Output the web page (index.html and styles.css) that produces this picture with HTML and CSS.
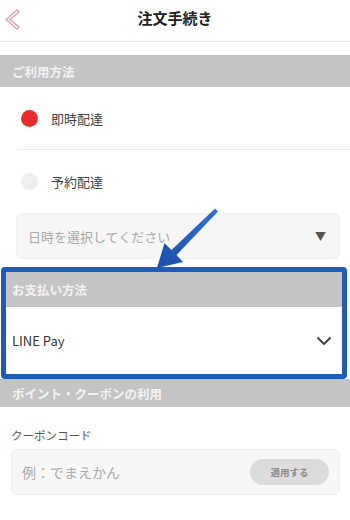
FILE: index.html
```html
<!DOCTYPE html>
<html lang="ja">
<head>
<meta charset="utf-8">
<link rel="stylesheet" href="styles.css">
</head>
<body>
<div class="page">
  <header class="header">
    <svg class="back" width="24" height="40" viewBox="0 0 24 40">
      <path d="M17 10 L6 19.5 L17 29 L19 27 L10 19.5 L19 12 Z" fill="none" stroke="#e0a0a8" stroke-width="1.4" stroke-linejoin="round"/>
    </svg>
    <h1 class="title">注文手続き</h1>
  </header>

  <div class="band band-first">ご利用方法</div>
  <div class="option option-sep">
    <span class="dot dot-on"></span><span class="opt-label">即時配達</span>
  </div>
  <div class="option">
    <span class="dot dot-off"></span><span class="opt-label">予約配達</span>
  </div>
  <div class="select">
    <span class="select-text">日時を選択してください</span>
    <span class="select-caret">▼</span>
  </div>

  <div class="highlight">
    <div class="band band-inner">お支払い方法</div>
    <div class="pay-row">
      <span class="pay-label">LINE Pay</span>
      <svg class="chev" width="16" height="10" viewBox="0 0 16 10">
        <polyline points="2,2 8,8 14,2" fill="none" stroke="#444" stroke-width="2" stroke-linecap="round" stroke-linejoin="round"/>
      </svg>
    </div>
  </div>

  <div class="band band-coupon">ポイント・クーポンの利用</div>
  <div class="coupon">
    <div class="coupon-label">クーポンコード</div>
    <div class="coupon-input">
      <span class="coupon-ph">例：でまえかん</span>
      <span class="apply">適用する</span>
    </div>
  </div>

  <svg class="arrow" width="90" height="75" viewBox="0 0 90 75">
    <defs>
      <linearGradient id="ag" x1="0" y1="1" x2="1" y2="0">
        <stop offset="0" stop-color="#1a4fa8"/>
        <stop offset="1" stop-color="#2f73d6"/>
      </linearGradient>
    </defs>
    <polygon points="12,64 38,58 31.5,51 73,7.5 70,4.5 26.5,46 19.5,39" fill="url(#ag)"/>
  </svg>
</div>
</body>
</html>
```

FILE: styles.css
```css
* { box-sizing: border-box; }
html, body { margin: 0; padding: 0; background: #fff; }
body {
  font-family: "Noto Sans CJK JP", "Noto Sans", sans-serif;
  color: #333;
}
.page {
  position: relative;
  width: 350px;
  height: 520px;
  overflow: hidden;
}
.header {
  position: relative;
  height: 42px;
  border-bottom: 1px solid #e6e6e6;
  display: flex;
  align-items: center;
  justify-content: center;
}
.back {
  position: absolute;
  left: 0;
  top: 0;
}
.title {
  margin: 0;
  font-size: 15px;
  font-weight: 700;
  color: #222;
  line-height: 1;
  margin-top: -6px;
}
.band {
  background: #c4c4c4;
  color: #f2f2f2;
  font-size: 12.5px;
  font-weight: 700;
  display: flex;
  align-items: center;
  padding-left: 12px;
}
.band-first {
  margin-top: 13px;
  height: 32px;
}
.option {
  height: 63px;
  display: flex;
  align-items: center;
  padding-left: 21px;
}
.option-sep {
  position: relative;
}
.option-sep::after {
  content: "";
  position: absolute;
  left: 17px;
  right: 0;
  bottom: 0;
  height: 1px;
  background: #ececec;
}
.dot {
  width: 17px;
  height: 17px;
  border-radius: 50%;
  flex: none;
}
.dot-on { background: #e62e2e; }
.dot-off { background: #f0f0f0; }
.opt-label {
  margin-left: 13px;
  font-size: 13px;
  color: #444;
}
.select {
  margin: 0 10px 0 16px;
  height: 46px;
  background: #f6f6f6;
  border: 1px solid #efefef;
  border-radius: 6px;
  display: flex;
  align-items: center;
  justify-content: space-between;
  padding: 0 13px 0 11px;
}
.select-text {
  font-size: 13px;
  color: #aaa;
}
.select-caret {
  font-size: 11px;
  color: #555;
}
.highlight {
  margin: 8px 3px 0 1px;
  border: 5px solid #1f5cb8;
  border-radius: 4px;
  height: 112px;
}
.band-inner {
  height: 35px;
  padding-left: 6px;
}
.pay-row {
  height: 67px;
  display: flex;
  align-items: center;
  justify-content: space-between;
  padding: 0 10px 0 6px;
}
.pay-label {
  font-size: 13px;
  color: #333;
}
.band-coupon {
  height: 28px;
}
.coupon {
  padding: 20px 10px 0 11px;
}
.coupon-label {
  font-size: 11.5px;
  color: #555;
  line-height: 16px;
}
.coupon-input {
  margin-top: 6px;
  height: 46px;
  background: #f7f7f7;
  border: 1px solid #efefef;
  border-radius: 6px;
  display: flex;
  align-items: center;
  justify-content: space-between;
  padding: 0 10px 0 10px;
}
.coupon-ph {
  font-size: 14px;
  color: #aaa;
}
.apply {
  width: 79px;
  height: 26px;
  border-radius: 13px;
  background: #dcdcdc;
  color: #8a8a8a;
  font-size: 9.5px;
  font-weight: 700;
  display: flex;
  align-items: center;
  justify-content: center;
}
.arrow {
  position: absolute;
  left: 145px;
  top: 204px;
}
```
